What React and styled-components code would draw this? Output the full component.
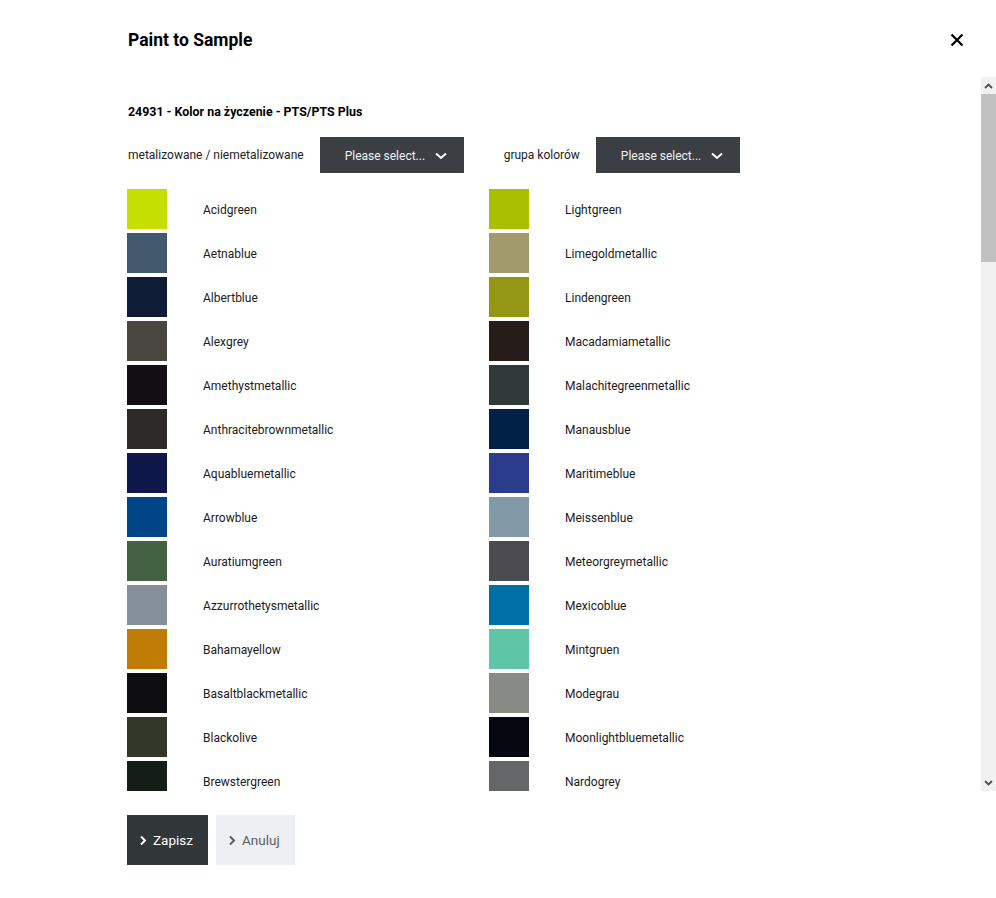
import styled, { createGlobalStyle } from 'styled-components'

const GlobalStyle = createGlobalStyle`
  html, body {
    margin: 0;
    padding: 0;
    background: #ffffff;
  }
  body {
    font-family: Roboto, "Liberation Sans", Arial, sans-serif;
    color: #000;
  }
`

const Modal = styled.div`
  width: 996px;
  height: 898px;
  display: flex;
  flex-direction: column;
  background: #fff;
`
const Header = styled.div`
  height: 77px;
  box-sizing: border-box;
  padding: 28px 27px 0 128px;
  display: flex;
  justify-content: space-between;
  align-items: flex-start;
`
const Title = styled.h2`
  margin: 0;
  font-size: 17.5px;
  line-height: 24px;
  font-weight: 700;
`
const CloseButton = styled.button`
  border: none;
  background: none;
  padding: 0;
  width: 24px;
  height: 24px;
  display: flex;
  align-items: center;
  justify-content: center;
  cursor: pointer;
`
const ScrollFrame = styled.div`
  height: 714px;
  display: flex;
`
const ScrollArea = styled.div`
  flex: 1;
  overflow-y: auto;
  box-sizing: border-box;
  padding: 25px 0 24px 127px;
  scrollbar-width: none;
  &::-webkit-scrollbar {
    display: none;
  }
`
const Scrollbar = styled.div`
  width: 15px;
  flex: none;
  display: flex;
  flex-direction: column;
  background: #f1f1f1;
`
const ScrollButton = styled.div`
  height: 17px;
  flex: none;
  display: flex;
  align-items: center;
  justify-content: center;
`
const ScrollThumb = styled.div`
  height: 168px;
  flex: none;
  background: #c1c1c1;
`
const ScrollTrack = styled.div`
  flex: 1;
`
const Subtitle = styled.h3`
  margin: 0 0 16px 1px;
  padding-top: 1px;
  font-size: 12.4px;
  line-height: 18px;
  font-weight: 700;
`
const Filters = styled.div`
  display: flex;
  align-items: center;
  gap: 39px;
  margin-bottom: 16px;
`
const FilterGroup = styled.div`
  display: flex;
  align-items: center;
  gap: 16px;
`
const FilterLabel = styled.label`
  font-size: 12px;
  color: #222;
  padding-left: 1px;
`
const Select = styled.button`
  width: 144px;
  height: 36px;
  border: none;
  background: #3b3e43;
  color: #f2f2f2;
  font-family: inherit;
  font-size: 12px;
  display: flex;
  align-items: center;
  justify-content: space-between;
  padding: 2px 17px 0 25px;
  box-sizing: border-box;
  cursor: pointer;
`
const Grid = styled.div`
  display: grid;
  grid-template-columns: 362px 362px;
`
const Column = styled.div`
  display: flex;
  flex-direction: column;
  gap: 4px;
`
const Row = styled.div`
  display: flex;
  align-items: center;
  height: 40px;
`
const Swatch = styled.div`
  width: 40px;
  height: 40px;
  flex: none;
  background: ${(p) => p.$color};
`
const ColorName = styled.span`
  margin-left: 36px;
  padding-top: 2px;
  font-size: 12px;
  color: #1a1a1a;
`
const Footer = styled.div`
  display: flex;
  gap: 8px;
  padding: 24px 0 0 127px;
`
const Button = styled.button`
  height: 50px;
  border: none;
  font-family: inherit;
  font-size: 13.5px;
  display: flex;
  align-items: center;
  gap: 6px;
  padding: 0 15px 0 12px;
  cursor: pointer;
  background: ${(p) => (p.$primary ? '#313639' : '#eeeff2')};
  color: ${(p) => (p.$primary ? '#ffffff' : '#5a5d62')};
`

const Chevron = ({ color }) => (
  <svg width="8" height="11" viewBox="0 0 8 11">
    <path d="M2 1.5 L6 5.5 L2 9.5" fill="none" stroke={color} strokeWidth="2" />
  </svg>
)

const ChevronDown = () => (
  <svg width="12" height="8" viewBox="0 0 12 8">
    <path d="M1 1.5 L6 6 L11 1.5" fill="none" stroke="#ffffff" strokeWidth="2" />
  </svg>
)

const ScrollArrow = ({ up }) => (
  <svg width="9" height="6" viewBox="0 0 9 6">
    <path d={up ? 'M1 5 L4.5 1.5 L8 5' : 'M1 1 L4.5 4.5 L8 1'} fill="none" stroke="#505050" strokeWidth="1.8" />
  </svg>
)

const filler = ['#6a1c24', '#8c2a2a', '#b0b4b8', '#2f4a6a', '#5c6f3a', '#a06a2c', '#3c3f44', '#d8d2c4', '#1e2f56', '#7a8a94']

const leftVisible = [
  ['Acidgreen', '#c5e000'],
  ['Aetnablue', '#435a6e'],
  ['Albertblue', '#0e1c36'],
  ['Alexgrey', '#4a4740'],
  ['Amethystmetallic', '#120e14'],
  ['Anthracitebrownmetallic', '#2e2a2a'],
  ['Aquabluemetallic', '#0d1749'],
  ['Arrowblue', '#004587'],
  ['Auratiumgreen', '#436143'],
  ['Azzurrothetysmetallic', '#848f9a'],
  ['Bahamayellow', '#c17c05'],
  ['Basaltblackmetallic', '#0e0d0f'],
  ['Blackolive', '#33372a'],
  ['Brewstergreen', '#141d16'],
]
const leftMore = 'Burgundyred Cabernetred Carminered Carraragrey Cassisred Chalk Chartreuse Cherrymetallic Chestnutbrown Clayred Cognacbrown Copperred Crayon Crimsonred Darkblue Darksea Diamondblue Dolomitesilver Ectoplasma Emeraldgreen Endurablue Fashiongrey Forestgreen Frozenberry Frozenblue Fujiwhite Gentianblue Glaciergrey Graphiteblue Grandprixwhite Gulfblue Guardsred Gunmetal Hellgrey Hyacinthred Icegrey Irishgreen Ivorywhite Jadegreen Jetblack Kalaharigold Kiwigreen Kingfisherblue Kreidegrau Kryptongrey Kupferbraun Kyalamigreen Karminrot'.split(' ')

const rightVisible = [
  ['Lightgreen', '#a8c000'],
  ['Limegoldmetallic', '#a29a6d'],
  ['Lindengreen', '#939713'],
  ['Macadamiametallic', '#261d1a'],
  ['Malachitegreenmetallic', '#303b39'],
  ['Manausblue', '#012246'],
  ['Maritimeblue', '#2b3d8c'],
  ['Meissenblue', '#829aa6'],
  ['Meteorgreymetallic', '#4a4a50'],
  ['Mexicoblue', '#006fa8'],
  ['Mintgruen', '#5ec6a7'],
  ['Modegrau', '#888a86'],
  ['Moonlightbluemetallic', '#05090f'],
  ['Nardogrey', '#656668'],
]
const rightMore = 'Nightblue Oakgreen Olivegreen Orangeclassic Oslobue Ozeanblau Papayaorange Pastelblue Pastelyellow Petrolblue Pinkmetallic Pinewoodgreen Platinumsilver Pythongreen Racinggreen Racingyellow Rivierablue Royalpurple Rubinred Rubystar Safarigreen Salzburgred Sandbeige Sapphireblue Seablue Sharkblue Signalgreen Signalyellow Silverrose Slategrey Speedyellow Stonegrey Sunsetorange Tangerine Tahoeblue Turquoise Ultraviolet Vanadiumgrey Vipergreen Violetmetallic Voodooblue Yachtingblue Yellowgreen Zanzibarred Zenithblue Zirconsilver Zuffenhausengrey Zypressengruen'.split(' ')

const withFiller = (visible, more) => [
  ...visible,
  ...more.map((name, i) => [name, filler[i % filler.length]]),
]

const columns = [withFiller(leftVisible, leftMore), withFiller(rightVisible, rightMore)]

const App = () => {
  return (
    <Modal>
      <GlobalStyle />
      <Header>
        <Title>Paint to Sample</Title>
        <CloseButton aria-label="close">
          <svg width="14" height="14" viewBox="0 0 14 14">
            <path d="M1.5 1.5 L12.5 12.5 M12.5 1.5 L1.5 12.5" stroke="#000" strokeWidth="2.2" />
          </svg>
        </CloseButton>
      </Header>
      <ScrollFrame>
        <ScrollArea>
          <Subtitle>24931 - Kolor na życzenie - PTS/PTS Plus</Subtitle>
          <Filters>
            <FilterGroup>
              <FilterLabel>metalizowane / niemetalizowane</FilterLabel>
              <Select>
                Please select...
                <ChevronDown />
              </Select>
            </FilterGroup>
            <FilterGroup>
              <FilterLabel>grupa kolorów</FilterLabel>
              <Select>
                Please select...
                <ChevronDown />
              </Select>
            </FilterGroup>
          </Filters>
          <Grid>
            {columns.map((list, ci) => (
              <Column key={ci}>
                {list.map(([name, color]) => (
                  <Row key={name}>
                    <Swatch $color={color} />
                    <ColorName>{name}</ColorName>
                  </Row>
                ))}
              </Column>
            ))}
          </Grid>
        </ScrollArea>
        <Scrollbar>
          <ScrollButton>
            <ScrollArrow up />
          </ScrollButton>
          <ScrollThumb />
          <ScrollTrack />
          <ScrollButton>
            <ScrollArrow />
          </ScrollButton>
        </Scrollbar>
      </ScrollFrame>
      <Footer>
        <Button $primary>
          <Chevron color="#ffffff" />
          Zapisz
        </Button>
        <Button>
          <Chevron color="#5a5d62" />
          Anuluj
        </Button>
      </Footer>
    </Modal>
  )
}

export default App
